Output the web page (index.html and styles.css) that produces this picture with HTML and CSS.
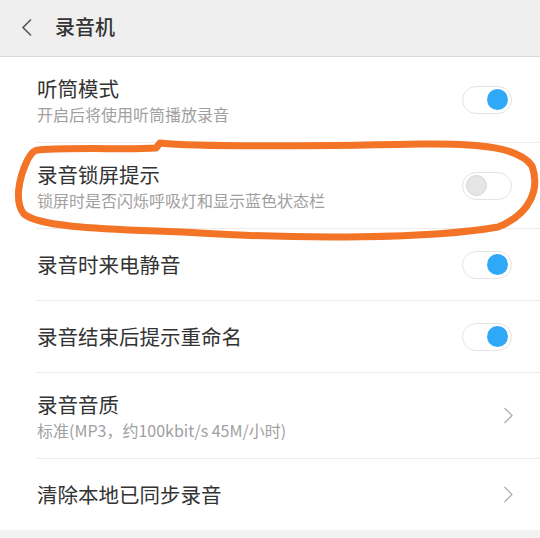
FILE: index.html
```html
<!DOCTYPE html>
<html lang="zh-CN">
<head>
<meta charset="utf-8">
<title>录音机</title>
<link rel="stylesheet" href="styles.css">
</head>
<body>
<div class="page">
  <header class="topbar">
    <svg class="back" width="12" height="19" viewBox="0 0 12 19"><path d="M10 1.5 L2 9.5 L10 17.5" fill="none" stroke="#555" stroke-width="1.6"/></svg>
    <h1 class="title">录音机</h1>
  </header>
  <main class="list">
    <div class="row two">
      <div class="texts"><div class="main">听筒模式</div><div class="sub">开启后将使用听筒播放录音</div></div>
      <span class="toggle on"><span class="knob"></span></span>
    </div>
    <div class="row two">
      <div class="texts"><div class="main">录音锁屏提示</div><div class="sub">锁屏时是否闪烁呼吸灯和显示蓝色状态栏</div></div>
      <span class="toggle off"><span class="knob"></span></span>
    </div>
    <div class="row one">
      <div class="texts"><div class="main">录音时来电静音</div></div>
      <span class="toggle on"><span class="knob"></span></span>
    </div>
    <div class="row one">
      <div class="texts"><div class="main">录音结束后提示重命名</div></div>
      <span class="toggle on"><span class="knob"></span></span>
    </div>
    <div class="row two">
      <div class="texts"><div class="main">录音音质</div><div class="sub">标准(MP3，约100kbit/s 45M/小时)</div></div>
      <svg class="chev" width="11" height="17" viewBox="0 0 11 17"><path d="M1.5 1 L9 8.5 L1.5 16" fill="none" stroke="#b0b0b0" stroke-width="1.3"/></svg>
    </div>
    <div class="row one last">
      <div class="texts"><div class="main">清除本地已同步录音</div></div>
      <svg class="chev" width="11" height="17" viewBox="0 0 11 17"><path d="M1.5 1 L9 8.5 L1.5 16" fill="none" stroke="#b0b0b0" stroke-width="1.3"/></svg>
    </div>
  </main>
  <div class="footer-gap"></div>
  <svg class="scribble" width="540" height="538" viewBox="0 0 540 538">
    <path d="M38 150 C 80 147, 128 150, 156 148 L 160 143 C 200 147, 320 146, 420 144 C 482 143, 520 148, 532 166 C 540 188, 531 214, 498 227 C 430 239, 300 239, 200 233 C 120 229, 42 229, 24 214 C 14 202, 19 178, 27 161 C 31 153, 34 150, 38 150 Z" fill="none" stroke="#f37426" stroke-width="7" stroke-linejoin="round" stroke-linecap="round"/>
  </svg>
</div>
</body>
</html>
```
FILE: styles.css
```css
html, body {
  margin: 0;
  padding: 0;
  background: #ffffff;
}
body {
  font-family: "Noto Sans CJK SC", "Noto Sans", "Liberation Sans", sans-serif;
  color: #333333;
}
.page {
  position: relative;
  width: 540px;
  height: 538px;
  overflow: hidden;
  display: flex;
  flex-direction: column;
}
.topbar {
  height: 56px;
  flex: none;
  background: #efefef;
  border-bottom: 1px solid #dadada;
  display: flex;
  align-items: center;
  padding-left: 21px;
  box-sizing: content-box;
}
.back {
  display: block;
  margin-top: -1px;
}
.title {
  margin: -2px 0 0 22px;
  font-size: 20px;
  font-weight: 500;
  color: #333;
  line-height: 28px;
}
.list {
  flex: none;
  background: #fff;
}
.row {
  display: flex;
  align-items: center;
  margin-left: 36px;
  padding-left: 1px;
  padding-right: 28px;
  border-bottom: 1px solid #ececec;
}
.row.two { height: 85px; }
.row.one { height: 71px; }
.row.last { border-bottom: none; }
.texts {
  flex: 1;
  min-width: 0;
}
.main {
  font-size: 20.5px;
  line-height: 27px;
  color: #333;
}
.sub {
  font-size: 16px;
  line-height: 22px;
  color: #a0a0a0;
  margin-top: 1px;
}
.toggle {
  position: relative;
  width: 48px;
  height: 26px;
  border: 1px solid #e4e4e4;
  border-radius: 14px;
  background: #fff;
  flex: none;
}
.knob {
  position: absolute;
  top: 2.5px;
  width: 21px;
  height: 21px;
  border-radius: 50%;
}
.toggle.on .knob {
  right: 3px;
  background: #30a8f8;
}
.toggle.off .knob {
  left: 3px;
  width: 19px;
  height: 19px;
  background: #e6e6e6;
  border: 1px solid #d6d6d6;
}
.chev {
  display: block;
  flex: none;
  margin-right: -2px;
}
.footer-gap {
  flex: 1;
  background: #f2f2f2;
}
.scribble {
  position: absolute;
  left: 0;
  top: 0;
  pointer-events: none;
}
```
